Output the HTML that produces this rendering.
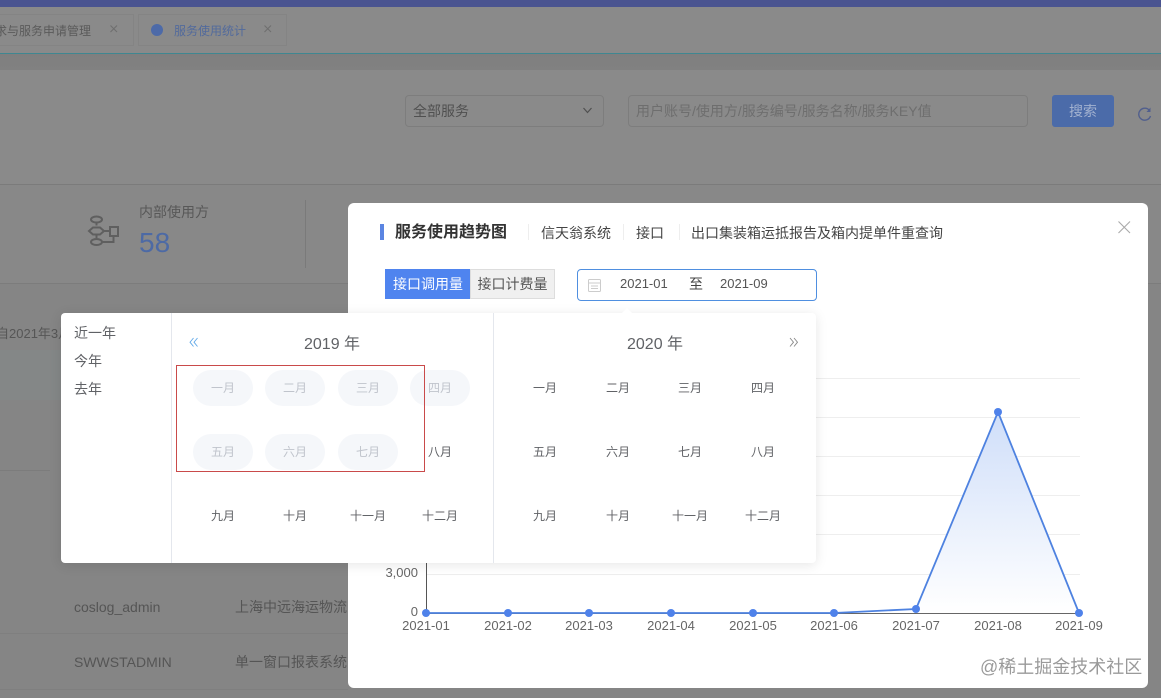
<!DOCTYPE html>
<html lang="zh-CN"><head><meta charset="utf-8">
<style>
*{box-sizing:border-box;margin:0;padding:0}
html,body{width:1161px;height:698px;overflow:hidden}
body{position:relative;background:#858585;font-family:"Liberation Sans","Noto Sans CJK SC",sans-serif;color:#666;font-size:13px}
.a{position:absolute;white-space:nowrap}
.t{position:absolute;white-space:nowrap;line-height:18px}
.m{position:absolute;white-space:nowrap;line-height:36px;height:36px;width:60px;text-align:center;font-size:12px;color:#606266;border-radius:18px}
.d{background:#f5f7fa;color:#c0c4cc}
</style></head>
<body>
<!-- background -->
<div class="a" style="left:0;top:0;width:1161px;height:7px;background:#4a5490"></div>
<div class="a" style="left:0;top:7px;width:1161px;height:46px;background:#8a8a8a"></div>
<div class="a" style="left:0;top:53px;width:1161px;height:1px;background:#3f8791"></div>
<div class="a" style="left:0;top:54px;width:1161px;height:16px;background:linear-gradient(#7f7f7f,#818181)"></div>
<div class="a" style="left:0;top:70px;width:1161px;height:114px;background:#8a8a8a"></div>
<div class="a" style="left:0;top:184px;width:1161px;height:1px;background:#7b7b7b"></div>
<div class="a" style="left:0;top:185px;width:1161px;height:98px;background:#888"></div>
<div class="a" style="left:0;top:283px;width:1161px;height:1px;background:#7c7c7c"></div>
<div class="a" style="left:0;top:350px;width:348px;height:50px;background:#848787"></div>
<div class="a" style="left:0;top:470px;width:50px;height:1px;background:#7c7c7c"></div>
<div class="a" style="left:0;top:633px;width:348px;height:1px;background:#7f7f7f"></div>
<div class="a" style="left:0;top:689px;width:348px;height:1px;background:#7f7f7f"></div>

<!-- tabs -->
<div class="a" style="left:-20px;top:14px;width:154px;height:32px;border:1px solid #848484"></div>
<div class="t" style="left:-1px;top:22px;font-size:12px;color:#5a5a5a;width:92px;overflow:hidden;direction:rtl">求与服务申请管理</div>
<svg class="a" style="left:109px;top:24px" width="10" height="10"><path d="M1.500 1.500L8 8M8 1.500L1.500 8" stroke="#6e6e6e" fill="none"/></svg>
<div class="a" style="left:138px;top:14px;width:149px;height:32px;border:1px solid #848484"></div>
<div class="a" style="left:151px;top:24px;width:12px;height:12px;border-radius:50%;background:#4d6aa8"></div>
<div class="t" style="left:174px;top:22px;font-size:12px;color:#526a9c">服务使用统计</div>
<svg class="a" style="left:263px;top:24px" width="10" height="10"><path d="M1.500 1.500L8 8M8 1.500L1.500 8" stroke="#6e6e6e" fill="none"/></svg>

<!-- search -->
<div class="a" style="left:405px;top:95px;width:199px;height:32px;border:1px solid #7d7d7d;border-radius:4px"></div>
<div class="t" style="left:413px;top:102px;font-size:14px;color:#505050">全部服务</div>
<svg class="a" style="left:582px;top:106px" width="12" height="10"><path d="M1.500 2L5.500 6.500L9.500 2" stroke="#505050" stroke-width="1.200" fill="none"/></svg>
<div class="a" style="left:628px;top:95px;width:400px;height:32px;border:1px solid #7d7d7d;border-radius:4px"></div>
<div class="t" style="left:636px;top:102px;font-size:14px;color:#6e6e6e">用户账号/使用方/服务编号/服务名称/服务KEY值</div>
<div class="a" style="left:1052px;top:95px;width:62px;height:32px;background:#4b6ba9;border-radius:3px;color:#a3b2d0;font-size:14px;line-height:32px;text-align:center">搜索</div>
<svg class="a" style="left:1136px;top:105px" width="18" height="18" viewBox="0 0 18 18"><path d="M13.500 5.500A6 6 0 1 0 14.500 11" stroke="#515f8d" stroke-width="1.400" fill="none"/><path d="M14.500 2.500V7H10.500Z" fill="#515f8d"/></svg>

<!-- stats -->
<svg class="a" style="left:87px;top:214px" width="34" height="36" viewBox="0 0 34 36" fill="none" stroke="#5f5f5f" stroke-width="2"><ellipse cx="9.500" cy="5.500" rx="5.500" ry="3"/><path d="M9.500 8.500V11.500"/><path d="M2 17L6 13.500H13L17 17L13 20.500H6Z"/><path d="M9.500 20.500V24"/><ellipse cx="9.500" cy="28" rx="5.500" ry="3"/><rect x="23" y="13" width="8" height="9"/><path d="M17 17H23M26.500 22V28H15"/></svg>
<div class="t" style="left:139px;top:203px;font-size:14px;color:#585858">内部使用方</div>
<div class="t" style="left:139px;top:227px;font-size:28px;line-height:32px;color:#4d6aa5">58</div>
<div class="a" style="left:305px;top:200px;width:1px;height:68px;background:#7a7a7a"></div>
<div class="t" style="left:-4px;top:325px;font-size:13px;color:#565656">自2021年3月</div>

<!-- table -->
<div class="t" style="left:74px;top:598px;font-size:14px;color:#555">coslog_admin</div>
<div class="t" style="left:235px;top:598px;font-size:14px;color:#555">上海中远海运物流</div>
<div class="t" style="left:74px;top:653px;font-size:14px;color:#555">SWWSTADMIN</div>
<div class="t" style="left:235px;top:653px;font-size:14px;color:#555">单一窗口报表系统</div>

<!-- modal -->
<div class="a" style="left:348px;top:203px;width:800px;height:485px;background:#fff;border-radius:6px"></div>
<div class="a" style="left:380px;top:224px;width:4px;height:16px;background:#5b85e2"></div>
<div class="t" style="left:395px;top:223px;font-size:16px;line-height:20px;font-weight:bold;color:#333">服务使用趋势图</div>
<div class="a" style="left:528px;top:224px;width:1px;height:16px;background:#eee"></div>
<div class="t" style="left:541px;top:224px;font-size:14px;color:#444">信天翁系统</div>
<div class="a" style="left:623px;top:224px;width:1px;height:16px;background:#eee"></div>
<div class="t" style="left:636px;top:224px;font-size:14px;color:#444">接口</div>
<div class="a" style="left:679px;top:224px;width:1px;height:16px;background:#eee"></div>
<div class="t" style="left:691px;top:224px;font-size:14px;color:#444">出口集装箱运抵报告及箱内提单件重查询</div>
<svg class="a" style="left:1117px;top:220px" width="15" height="15"><path d="M1.500 1.500L13 13M13 1.500L1.500 13" stroke="#aaa" stroke-width="1.100" fill="none"/></svg>

<div class="a" style="left:385px;top:269px;width:85px;height:30px;background:#4f84ef;color:#fff;font-size:14px;line-height:30px;text-align:center;text-indent:1px">接口调用量</div>
<div class="a" style="left:470px;top:269px;width:85px;height:30px;background:#f0f0f0;border:1px solid #ddd;color:#555;font-size:14px;line-height:28px;text-align:center">接口计费量</div>

<div class="a" style="left:577px;top:269px;width:240px;height:32px;border:1px solid #4f8fe0;border-radius:4px;background:#fff"></div>
<svg class="a" style="left:587px;top:278px" width="15" height="15" viewBox="0 0 15 15" fill="none" stroke="#ccc"><rect x="1.500" y="1.500" width="12" height="12" rx="1"/><path d="M1.500 5H13.500M4 8H11M4 10.500H11"/></svg>
<div class="t" style="left:620px;top:275px;font-size:13px;color:#555">2021-01</div>
<div class="t" style="left:689px;top:275px;font-size:14px;color:#444">至</div>
<div class="t" style="left:720px;top:275px;font-size:13px;color:#555">2021-09</div>

<!-- chart -->
<svg class="a" style="left:348px;top:360px" width="800" height="290" viewBox="348 360 800 290">
<defs><linearGradient id="g" x1="0" y1="0" x2="0" y2="1"><stop offset="0" stop-color="#cfdef9"/><stop offset="1" stop-color="#ffffff"/></linearGradient></defs>
<g stroke="#eeeeee" stroke-width="1"><path d="M426 378.500H1080M426 417.500H1080M426 456.500H1080M426 495.500H1080M426 534.500H1080M426 574.500H1080"/></g>
<path d="M426.500 560V613" stroke="#555" stroke-width="1"/>
<path d="M426 613.500H1080" stroke="#666" stroke-width="1"/>
<path d="M834 613L916 609L998 412L1079 613Z" fill="url(#g)"/>
<path d="M426 613H834L916 609L998 412L1079 613" fill="none" stroke="#4e82e0" stroke-width="1.800"/>
<g fill="#4f82ea"><circle cx="426" cy="613" r="4"/><circle cx="508" cy="613" r="4"/><circle cx="589" cy="613" r="4"/><circle cx="671" cy="613" r="4"/><circle cx="753" cy="613" r="4"/><circle cx="834" cy="613" r="4"/><circle cx="916" cy="609" r="4"/><circle cx="998" cy="412" r="4"/><circle cx="1079" cy="613" r="4"/></g>
<g font-family="Liberation Sans, sans-serif" font-size="13" fill="#666"><text x="418" y="577" text-anchor="end">3,000</text><text x="418" y="616" text-anchor="end">0</text>
<g text-anchor="middle"><text x="426" y="630">2021-01</text><text x="508" y="630">2021-02</text><text x="589" y="630">2021-03</text><text x="671" y="630">2021-04</text><text x="753" y="630">2021-05</text><text x="834" y="630">2021-06</text><text x="916" y="630">2021-07</text><text x="998" y="630">2021-08</text><text x="1079" y="630">2021-09</text></g></g>
</svg>

<div class="t" style="left:980px;top:657px;font-size:18px;line-height:20px;color:#9a9a9a">@稀土掘金技术社区</div>

<!-- picker -->
<div class="a" style="left:61px;top:313px;width:755px;height:250px;background:#fff;border-radius:4px;box-shadow:0 2px 12px rgba(0,0,0,.1)"></div>
<div class="a" style="left:621px;top:308px;width:0;height:0;border-left:6px solid transparent;border-right:6px solid transparent;border-bottom:6px solid #fff"></div>
<div class="a" style="left:171px;top:313px;width:1px;height:250px;background:#e4e7ed"></div>
<div class="a" style="left:493px;top:313px;width:1px;height:250px;background:#e4e7ed"></div>
<div class="t" style="left:74px;top:324px;font-size:14px;color:#606266">近一年</div>
<div class="t" style="left:74px;top:352px;font-size:14px;color:#606266">今年</div>
<div class="t" style="left:74px;top:380px;font-size:14px;color:#606266">去年</div>
<svg class="a" style="left:189px;top:337px" width="10" height="11"><path d="M4.500 1L1 5.200L4.500 9.500M8.500 1L5 5.200L8.500 9.500" stroke="#5fa8e8" stroke-width=".9" fill="none"/></svg>
<div class="t" style="left:304px;top:336px;font-size:16px;color:#606266">2019 年</div>
<div class="t" style="left:627px;top:336px;font-size:16px;color:#606266">2020 年</div>
<svg class="a" style="left:789px;top:337px" width="10" height="11"><path d="M1 1L4.500 5.200L1 9.500M5 1L8.500 5.200L5 9.500" stroke="#888" stroke-width=".9" fill="none"/></svg>

<div class="m d" style="left:193px;top:370px">一月</div><div class="m d" style="left:265px;top:370px">二月</div><div class="m d" style="left:338px;top:370px">三月</div><div class="m d" style="left:410px;top:370px">四月</div>
<div class="m d" style="left:193px;top:434px">五月</div><div class="m d" style="left:265px;top:434px">六月</div><div class="m d" style="left:338px;top:434px">七月</div><div class="m" style="left:410px;top:434px">八月</div>
<div class="m" style="left:193px;top:498px">九月</div><div class="m" style="left:265px;top:498px">十月</div><div class="m" style="left:338px;top:498px">十一月</div><div class="m" style="left:410px;top:498px">十二月</div>

<div class="m" style="left:515px;top:370px">一月</div><div class="m" style="left:588px;top:370px">二月</div><div class="m" style="left:660px;top:370px">三月</div><div class="m" style="left:733px;top:370px">四月</div>
<div class="m" style="left:515px;top:434px">五月</div><div class="m" style="left:588px;top:434px">六月</div><div class="m" style="left:660px;top:434px">七月</div><div class="m" style="left:733px;top:434px">八月</div>
<div class="m" style="left:515px;top:498px">九月</div><div class="m" style="left:588px;top:498px">十月</div><div class="m" style="left:660px;top:498px">十一月</div><div class="m" style="left:733px;top:498px">十二月</div>

<div class="a" style="left:176px;top:365px;width:249px;height:107px;border:1px solid #c94a4a"></div>
</body></html>
